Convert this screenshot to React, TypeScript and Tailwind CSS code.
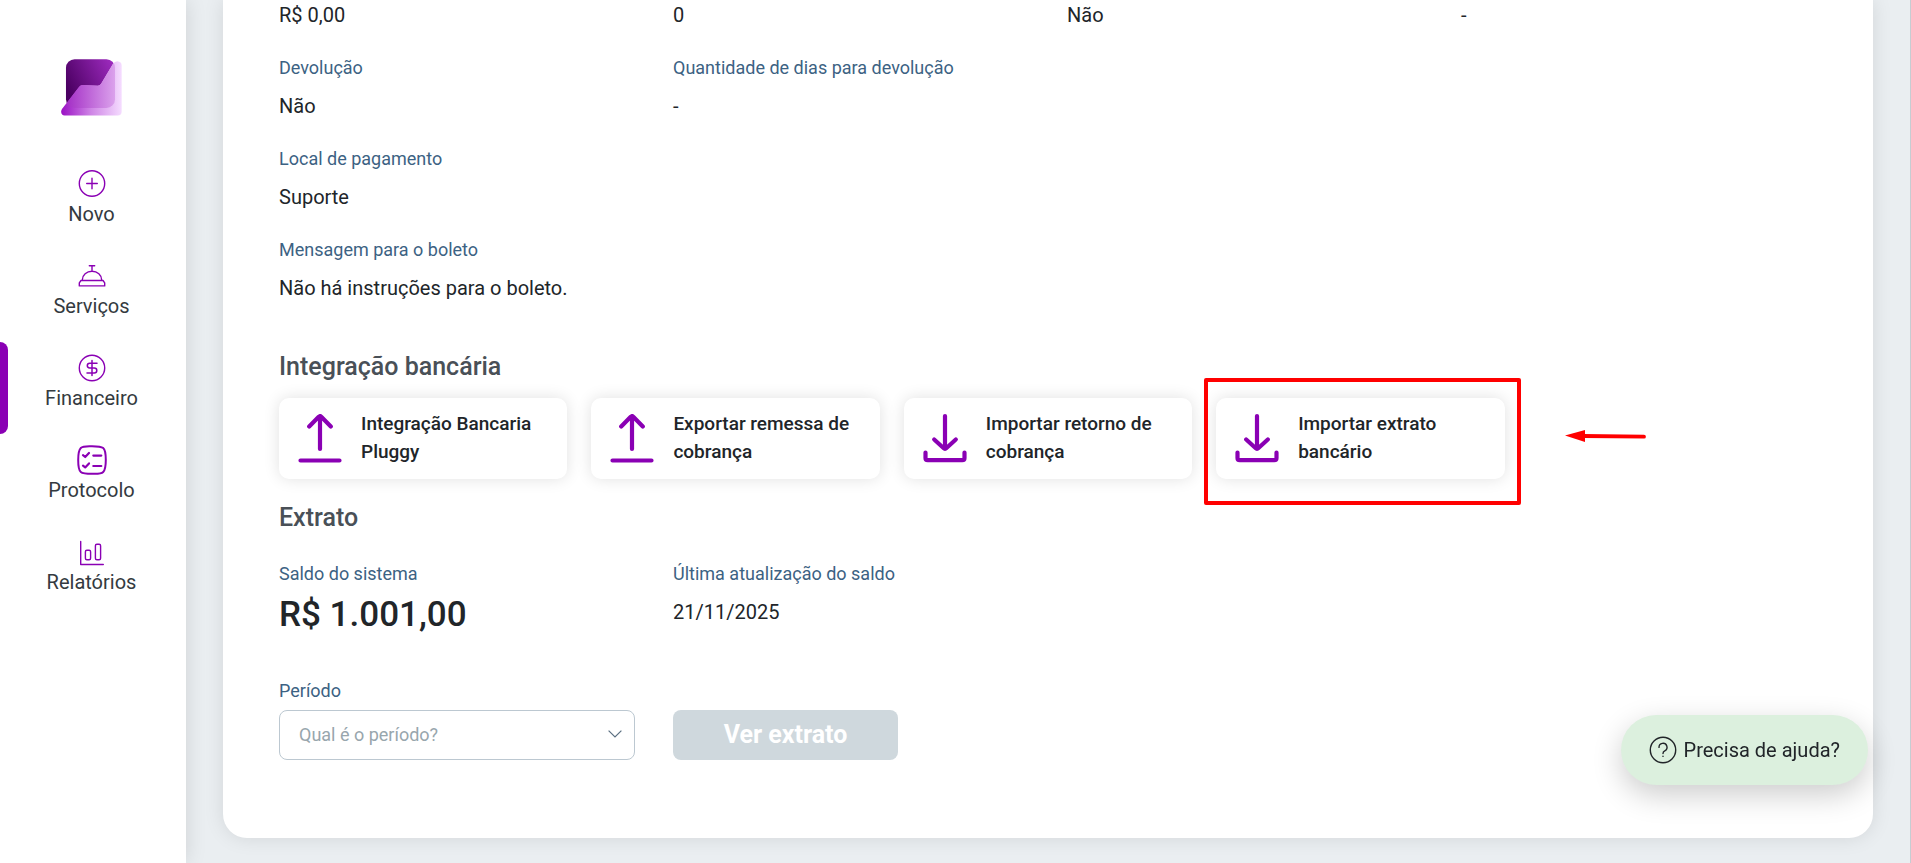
import type { ReactNode } from 'react';

type Field = { label: string; value: string };

const topValues = ['R$ 0,00', '0', 'Não', '-'];

const fieldRows: Field[][] = [
  [
    { label: 'Devolução', value: 'Não' },
    { label: 'Quantidade de dias para devolução', value: '-' },
  ],
  [{ label: 'Local de pagamento', value: 'Suporte' }],
  [{ label: 'Mensagem para o boleto', value: 'Não há instruções para o boleto.' }],
];

function Logo() {
  const sheet =
    'M194 347 C185 347 180 336 186 327 L238 260 Q242 255 248 255 L294 257 Q300 257 304 251 L340 191 Q345 183 353 183 Q366 184 366 196 V335 Q366 347 354 347 Z';
  return (
    <svg viewBox="183 177 184 171" className="h-[57px] w-[61px]" role="img" aria-label="Logo">
      <defs>
        <linearGradient id="dark" gradientUnits="userSpaceOnUse" x1="205" y1="270" x2="345" y2="200">
          <stop offset="0" stopColor="#4b0062" />
          <stop offset="1" stopColor="#9c2abd" />
        </linearGradient>
        <linearGradient id="light" gradientUnits="userSpaceOnUse" x1="183" y1="0" x2="366" y2="0">
          <stop offset="0" stopColor="#9a10c4" />
          <stop offset="0.5" stopColor="#cf86e6" />
          <stop offset="1" stopColor="#f5dcff" />
        </linearGradient>
        <linearGradient id="overlap" gradientUnits="userSpaceOnUse" x1="200" y1="0" x2="346" y2="0">
          <stop offset="0" stopColor="#a42fc6" />
          <stop offset="1" stopColor="#dba2ec" />
        </linearGradient>
        <clipPath id="sheet">
          <path d={sheet} />
        </clipPath>
      </defs>
      <rect x="198" y="177" width="148" height="147" rx="26" fill="url(#dark)" />
      <path d={sheet} fill="url(#light)" />
      <rect x="198" y="177" width="148" height="147" rx="26" fill="url(#overlap)" clipPath="url(#sheet)" />
    </svg>
  );
}

function Icon({ children, width = 1.4, large = false }: { children: ReactNode; width?: number; large?: boolean }) {
  return (
    <svg
      viewBox={large ? '0 0 30 30' : '0 0 28 28'}
      className={large ? 'size-[30px] shrink-0' : 'size-7 shrink-0'}
      fill="none"
      stroke="currentColor"
      strokeWidth={width}
      strokeLinecap="round"
      strokeLinejoin="round"
      aria-hidden="true"
    >
      {children}
    </svg>
  );
}

const navItems: { label: string; icon: ReactNode; active?: boolean }[] = [
  {
    label: 'Novo',
    icon: (
      <Icon>
        <circle cx="14" cy="13.5" r="12.7" />
        <path d="M14 8.2v10.6M8.7 13.5h10.6" />
      </Icon>
    ),
  },
  {
    label: 'Serviços',
    icon: (
      <Icon>
        <path d="M11.3 3.8h5.4M14 3.8v5M4.3 18.5v-.6a9.7 8.7 0 0 1 19.4 0v.6M3 18.5h22l1.7 2.4v3H1.3v-3z" />
      </Icon>
    ),
  },
  {
    label: 'Financeiro',
    active: true,
    icon: (
      <Icon>
        <circle cx="14" cy="14" r="12.7" />
        <path strokeWidth="1.5" d="M14 6.4v15.2M19 9.2h-7.3a2.4 2.4 0 0 0 0 4.8h4.6a2.4 2.4 0 0 1 0 5H9" />
      </Icon>
    ),
  },
  {
    label: 'Protocolo',
    icon: (
      <Icon width={2} large>
        <path d="M15 1.2c5 0 9 0 11.2 1.8S28.8 8 28.8 15s-.4 9.8-2.6 12S20 28.8 15 28.8 6 28.8 3.8 27 1.2 22 1.2 15 1.6 5.2 3.8 3 10 1.2 15 1.2z" />
        <path strokeWidth="2.2" d="M6 10.2l2.2 1.8 3.8-4M6 20.6l2.2 1.8 3.8-4M16.300 10.6h8M16.300 21h8" />
      </Icon>
    ),
  },
  {
    label: 'Relatórios',
    icon: (
      <Icon>
        <path d="M2.7 3.5v23h22.6" />
        <rect x="7.4" y="12.3" width="5.2" height="9.4" rx="1.5" />
        <rect x="17.4" y="6.2" width="5.2" height="15.5" rx="1.5" />
      </Icon>
    ),
  },
];

function TransferIcon({ kind }: { kind: 'up' | 'down' }) {
  return (
    <svg
      viewBox="0 0 44 50"
      className="h-[50px] w-11 shrink-0 text-[#8a00b4]"
      fill="none"
      stroke="currentColor"
      strokeWidth="4.2"
      strokeLinecap="round"
      strokeLinejoin="round"
      aria-hidden="true"
    >
      {kind === 'up' ? (
        <path d="M22 36V3M11.2 13.5L20.5 4Q22 2.5 23.5 4L32.8 13.5M2.5 47.5H41.5" />
      ) : (
        <path d="M22 3v33M11.2 26.5L20.5 35Q22 36.5 23.5 35L32.8 26.5M2.5 39.500v5.5q0 2.200 2.200 2.200h34.600q2.200 0 2.200-2.200V39.500" />
      )}
    </svg>
  );
}

const tiles: { label: string; kind: 'up' | 'down'; marked?: boolean }[] = [
  { label: 'Integração Bancaria Pluggy', kind: 'up' },
  { label: 'Exportar remessa de cobrança', kind: 'up' },
  { label: 'Importar retorno de cobrança', kind: 'down' },
  { label: 'Importar extrato bancário', kind: 'down', marked: true },
];

function Label({ children }: { children: ReactNode }) {
  return <p className="text-lg leading-7 text-[#3c6283]">{children}</p>;
}

function Heading({ children }: { children: ReactNode }) {
  return <h2 className="text-[25px] leading-9 font-medium text-[#495057]">{children}</h2>;
}

export default function App() {
  return (
    <div className="flex min-h-screen bg-[#eaeef1] font-['Roboto','Liberation_Sans',sans-serif] text-[#212529]">
      <aside className="z-10 w-[186px] shrink-0 bg-white shadow-[0_0_20px_rgba(0,0,0,0.12)]">
        <a href="#inicio" className="mt-[59px] flex justify-center pr-[3px]">
          <Logo />
        </a>
        <nav className="mt-[42px]">
          {navItems.map((item) => (
            <a
              key={item.label}
              href={'#' + item.label.toLowerCase()}
              className="relative flex h-[92px] flex-col items-center gap-px pt-3 pr-[3px]"
            >
              {item.active && <span className="absolute inset-y-0 left-0 w-2 rounded-r-lg bg-[#8a00b4]" />}
              <span className="flex h-7 items-center text-[#8a00b4]">{item.icon}</span>
              <span className="text-xl leading-[30px] text-[#343a40]">{item.label}</span>
            </a>
          ))}
        </nav>
      </aside>

      <main className="min-w-0 flex-1 border-r border-[#c6cdd2] pr-[37px] pb-[25px] pl-[37px]">
        <section className="rounded-b-3xl bg-white px-14 pb-[78px] shadow-[0_0_20px_rgba(0,0,0,0.1)]">
          <div className="grid grid-cols-4 gap-x-[38px]">
            {topValues.map((value, i) => (
              <p key={i} className="text-xl leading-[30px]">
                {value}
              </p>
            ))}
          </div>

          {fieldRows.map((row, i) => (
            <div key={i} className="mt-6 grid grid-cols-4 gap-x-[38px]">
              {row.map((field) => (
                <div key={field.label}>
                  <Label>{field.label}</Label>
                  <p className="mt-[9px] text-xl leading-[30px]">{field.value}</p>
                </div>
              ))}
            </div>
          ))}

          <div className="mt-[46px]">
            <Heading>Integração bancária</Heading>
          </div>
          <div className="mt-[13px] grid grid-cols-5 gap-6">
            {tiles.map((tile) => (
              <div key={tile.label} className="relative">
                <button
                  type="button"
                  className="flex h-[81px] w-full items-center gap-[19px] rounded-[10px] bg-white px-[19px] pb-0.5 text-left text-[19px] leading-7 font-medium shadow-[0_0_16px_rgba(0,0,0,0.12)]"
                >
                  <TransferIcon kind={tile.kind} />
                  <span>{tile.label}</span>
                </button>
                {tile.marked && (
                  <>
                    <span className="pointer-events-none absolute -top-5 -right-4 -bottom-[26px] -left-3 rounded-xs border-4 border-[#ff0000]" />
                    <svg
                      viewBox="0 0 81 12"
                      className="absolute top-8 left-full ml-[60px] h-3 w-[81px]"
                      aria-hidden="true"
                    >
                      <path d="M0 5.5L20 0v12z" fill="#ff0000" />
                      <path d="M18 6L79 6.7" stroke="#ff0000" strokeWidth="3.8" strokeLinecap="round" />
                    </svg>
                  </>
                )}
              </div>
            ))}
          </div>

          <div className="mt-[21px]">
            <Heading>Extrato</Heading>
          </div>
          <div className="mt-6 grid grid-cols-4 gap-x-[38px]">
            <div>
              <Label>Saldo do sistema</Label>
              <p className="mt-1.5 text-[35px] leading-[42px] font-medium">R$ 1.001,00</p>
            </div>
            <div>
              <Label>Última atualização do saldo</Label>
              <p className="mt-[9px] text-xl leading-[30px]">21/11/2025</p>
            </div>
          </div>

          <form className="mt-[41px] grid grid-cols-4 items-end gap-x-[38px]">
            <div>
              <label htmlFor="periodo" className="block text-lg leading-7 text-[#3c6283]">
                Período
              </label>
              <div className="relative mt-[5px]">
                <select
                  id="periodo"
                  defaultValue=""
                  className="block h-[50px] w-full appearance-none rounded-lg border border-[#bcc8d1] bg-white px-[19px] text-lg text-[#98a6ad]"
                >
                  <option value="">Qual é o período?</option>
                </select>
                <svg
                  viewBox="0 0 14 8"
                  className="pointer-events-none absolute top-5 right-[13px] h-2 w-3.5"
                  fill="none"
                  stroke="#5c7082"
                  strokeWidth="1.2"
                  aria-hidden="true"
                >
                  <path d="M.6.6L7 7 13.4.6" />
                </svg>
              </div>
            </div>
            <button type="button" className="h-[50px] w-[225px] rounded-lg bg-[#cfd8dd] text-[25px] font-bold text-white">
              Ver extrato
            </button>
          </form>
        </section>
      </main>

      <button
        type="button"
        className="fixed right-[43px] bottom-[78px] z-20 flex h-[70px] items-center gap-[7px] rounded-full bg-[#dcf0de] px-7 text-xl text-[#212529] shadow-[0_10px_30px_rgba(0,0,0,0.2)]"
      >
        <Icon>
          <circle cx="14" cy="14" r="12.7" />
          <path d="M10 11.4a4 4 0 1 1 5.8 3.5c-1.2.6-1.8 1.2-1.8 2.6M14 20.3v.1" />
        </Icon>
        <span>Precisa de ajuda?</span>
      </button>
    </div>
  );
}
